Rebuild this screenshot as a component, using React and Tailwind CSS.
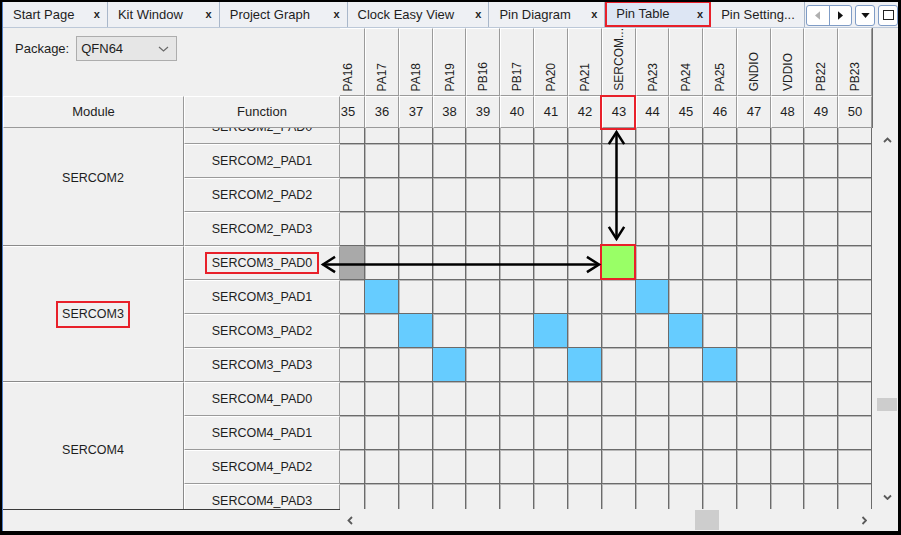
import React from 'react'

const font = "font-['Liberation_Sans',Arial,sans-serif]"

const tabs = [
  { label: 'Start Page', w: 'w-[105px]', close: true },
  { label: 'Kit Window', w: 'w-[112px]', close: true },
  { label: 'Project Graph', w: 'w-[128px]', close: true },
  { label: 'Clock Easy View', w: 'w-[142px]', close: true },
  { label: 'Pin Diagram', w: 'w-[116px]', close: true },
  { label: 'Pin Table', w: 'w-[106px]', close: true, active: true },
  { label: 'Pin Setting...', w: 'w-[94px]', close: false },
]

const pins = [
  { name: 'PA16', num: 35 },
  { name: 'PA17', num: 36 },
  { name: 'PA18', num: 37 },
  { name: 'PA19', num: 38 },
  { name: 'PB16', num: 39 },
  { name: 'PB17', num: 40 },
  { name: 'PA20', num: 41 },
  { name: 'PA21', num: 42 },
  { name: 'SERCOM...', num: 43, marked: true },
  { name: 'PA23', num: 44 },
  { name: 'PA24', num: 45 },
  { name: 'PA25', num: 46 },
  { name: 'GNDIO', num: 47 },
  { name: 'VDDIO', num: 48 },
  { name: 'PB22', num: 49 },
  { name: 'PB23', num: 50 },
]

const modules = [
  { name: 'SERCOM2' },
  { name: 'SERCOM3', marked: true },
  { name: 'SERCOM4' },
]

// row -> { col: kind }
const cellMap = {
  4: { 0: 'gray', 8: 'green' },
  5: { 1: 'blue', 9: 'blue' },
  6: { 2: 'blue', 6: 'blue', 10: 'blue' },
  7: { 3: 'blue', 7: 'blue', 11: 'blue' },
}

const cols = 'grid-cols-[34px_34px_34px_33px_34px_34px_34px_34px_34px_33px_34px_34px_34px_33px_34px_34px]'

const raised = 'border border-t-white border-l-white border-r-[#9a9a9a] border-b-[#9a9a9a]'

const Chevron = ({ dir }) => {
  const d = {
    up: 'M1 5 L4.5 1.5 L8 5',
    down: 'M1 1.5 L4.5 5 L8 1.5',
    left: 'M5 1 L1.5 4.5 L5 8',
    right: 'M1.5 1 L5 4.5 L1.5 8',
  }[dir]
  const box = dir === 'up' || dir === 'down' ? '0 0 9 6.5' : '0 0 6.5 9'
  const cls = dir === 'up' || dir === 'down' ? 'w-[9px] h-[6.5px]' : 'w-[6.5px] h-[9px]'
  return (
    <svg viewBox={box} className={cls}>
      <path d={d} fill="none" stroke="#5a5a5a" strokeWidth="1.8" />
    </svg>
  )
}

const TabBar = () => (
  <div className="h-[26px] flex bg-[#eef0f4] border-b border-[#bcc8d8]">
    {tabs.map(t => (
      <div
        key={t.label}
        className={
          t.active
            ? `${t.w} flex items-center justify-between pl-[9px] pr-[6px] bg-[#dde6f4] border-2 border-[#e8202a] -mt-[1px]`
            : `${t.w} flex items-center justify-between pl-[10px] pr-[7px] border-r border-[#a9b7ca]`
        }
      >
        <span className="text-[13px] text-[#1e1e1e] whitespace-nowrap">{t.label}</span>
        {t.close && <span className="text-[11px] font-bold text-[#222] leading-none">x</span>}
      </div>
    ))}
    <div className="flex items-center gap-[3px] pl-[1px] pt-[1px]">
      <div className="flex h-[21px] w-[46px] rounded-[3px] border border-[#7f9cc6] bg-white">
        <div className="flex-1 flex items-center justify-center border-r border-[#7f9cc6]">
          <svg viewBox="0 0 6 10" className="w-[5px] h-[9px]"><path d="M6 0 L0 5 L6 10 Z" fill="#b0b0b0" /></svg>
        </div>
        <div className="flex-1 flex items-center justify-center">
          <svg viewBox="0 0 6 10" className="w-[5px] h-[9px]"><path d="M0 0 L6 5 L0 10 Z" fill="#111" /></svg>
        </div>
      </div>
      <div className="flex h-[21px] w-[20px] items-center justify-center rounded-[3px] border border-[#7f9cc6] bg-white">
        <svg viewBox="0 0 10 6" className="w-[9px] h-[5px]"><path d="M0 0 L10 0 L5 6 Z" fill="#111" /></svg>
      </div>
      <div className="flex h-[21px] w-[20px] items-center justify-center rounded-[3px] border border-[#7f9cc6] bg-white">
        <div className="w-[11px] h-[10px] border-[1.5px] border-[#222]" />
      </div>
    </div>
  </div>
)

const Header = () => (
  <div className="h-[100px] flex">
    <div className="w-[337px] flex flex-col">
      <div className="h-[68px] flex items-start gap-[7px] pl-[12px] pt-[8px]">
        <span className="text-[13px] text-[#1e1e1e] leading-[25px]">Package:</span>
        <div className="w-[101px] h-[25px] flex items-center justify-between pl-[4px] pr-[7px] bg-[#e6e6e6] border border-[#adadad]">
          <span className="text-[13px] text-[#1e1e1e]">QFN64</span>
          <svg viewBox="0 0 11 6" className="w-[11px] h-[6px]">
            <path d="M1 1 L5.5 5 L10 1" fill="none" stroke="#6a6a6a" strokeWidth="1.2" />
          </svg>
        </div>
      </div>
      <div className="h-[32px] flex">
        <div className={`w-[181px] ${raised} flex items-center justify-center text-[13px] text-[#1e1e1e]`}>Module</div>
        <div className={`w-[156px] ${raised} flex items-center justify-center text-[13px] text-[#1e1e1e]`}>Function</div>
      </div>
    </div>
    <div className="w-[532px] overflow-x-clip">
      <div className={`-ml-[9px] grid ${cols} grid-rows-[68px_32px]`}>
        {pins.map(p => (
          <div key={p.name} className={`${raised} border-r-[#7c7c7c] flex items-end justify-center pb-[4px] overflow-hidden`}>
            <span className="[writing-mode:vertical-rl] rotate-180 text-[12px] text-[#1e1e1e] whitespace-nowrap leading-none">{p.name}</span>
          </div>
        ))}
        {pins.map(p => (
          <div key={p.num} className={`relative ${raised} border-r-[#7c7c7c] flex items-center justify-center text-[13px] text-[#1e1e1e]`}>
            {p.num}
            {p.marked && (
              <div className="absolute -left-[3px] -top-[2px] -right-[1px] -bottom-[3px] border-2 border-[#e8202a] z-20" />
            )}
          </div>
        ))}
      </div>
    </div>
    <div className="flex-1 border-l border-[#6e6e6e]" />
  </div>
)

const cellClass = kind => {
  if (kind === 'blue') return 'bg-[#66ccff]'
  if (kind === 'green') return 'relative bg-[#99ff66]'
  if (kind === 'gray') return 'bg-[#a9a9a9]'
  return 'shadow-[inset_1px_1px_0_#b8b8b8]'
}

const Body = () => (
  <div className="h-[381px] flex">
    <div className="w-[873px] overflow-hidden">
      <div className="-mt-[18px] flex">
        <div className="w-[181px] flex flex-col">
          {modules.map(m => (
            <div
              key={m.name}
              className="h-[136px] flex items-center justify-center border-t border-white border-b border-b-[#8a8a8a] border-r border-r-[#8a8a8a] text-[12.5px] text-[#1e1e1e]"
            >
              {m.marked ? (
                <span className="border-2 border-[#e8202a] px-[4px] py-[4px] leading-[15px]">{m.name}</span>
              ) : (
                m.name
              )}
            </div>
          ))}
        </div>
        <div className="w-[156px] flex flex-col">
          {modules.map(m =>
            [0, 1, 2, 3].map(i => (
              <div key={`${m.name}${i}`} className={`h-[34px] ${raised} flex items-center justify-center text-[12.5px] text-[#1e1e1e]`}>
                {m.name === 'SERCOM3' && i === 0 ? (
                  <span className="border-2 border-[#e8202a] px-[5px] py-[1px] leading-[16px]">{`${m.name}_PAD${i}`}</span>
                ) : (
                  `${m.name}_PAD${i}`
                )}
              </div>
            ))
          )}
        </div>
        <div className="w-[532px] overflow-hidden">
          <div className={`-ml-[9px] grid ${cols} auto-rows-[34px]`}>
            {Array.from({ length: 12 }).map((_, r) =>
              pins.map((p, c) => {
                const kind = cellMap[r] && cellMap[r][c]
                return (
                  <div key={`${r}-${c}`} className={`border-r border-b border-[#6b6b6b] ${cellClass(kind)}`}>
                    {kind === 'green' && (
                      <div className="absolute -left-[2px] -top-[2px] -right-[1px] -bottom-[1px] border-2 border-[#e8202a] z-10" />
                    )}
                  </div>
                )
              })
            )}
          </div>
        </div>
      </div>
    </div>
    <div className="w-[22px] flex flex-col bg-[#f0f0f0]">
      <div className="h-[24px] flex items-center justify-center"><Chevron dir="up" /></div>
      <div className="flex-1">
        <div className="mt-[246px] mx-[1px] h-[13px] bg-[#cdcdcd]" />
      </div>
      <div className="h-[24px] flex items-center justify-center"><Chevron dir="down" /></div>
    </div>
  </div>
)

const HScroll = () => (
  <div className="h-[22px] flex">
    <div className="w-[337px] border-t border-[#3a3a3a]" />
    <div className="w-[536px] flex">
      <div className="w-[20px] flex items-center justify-center"><Chevron dir="left" /></div>
      <div className="flex-1">
        <div className="ml-[335px] mt-[1px] w-[24px] h-[20px] bg-[#cdcdcd]" />
      </div>
      <div className="w-[24px] flex items-center justify-center"><Chevron dir="right" /></div>
    </div>
    <div className="flex-1" />
  </div>
)

const Arrows = () => (
  <svg className="absolute inset-0 w-[901px] h-[535px] pointer-events-none z-30" viewBox="0 0 901 535">
    <g fill="none" stroke="#000" strokeWidth="2.5" strokeLinecap="square">
      <line x1="324" y1="264.5" x2="598" y2="264.5" />
      <polyline points="334,257.5 323,264.5 334,271.5" />
      <polyline points="588,257.5 599,264.5 588,271.5" />
      <line x1="616.5" y1="133" x2="616.5" y2="238" />
      <polyline points="609.5,143 616.5,132 623.5,143" />
      <polyline points="609.5,228 616.5,239 623.5,228" />
    </g>
  </svg>
)

export default function App() {
  return (
    <div className={`relative w-[901px] h-[535px] bg-black pt-[2px] pl-[2px] pr-[3px] pb-[4px] ${font}`}>
      <div className="w-full h-full flex flex-col bg-[#f0f0f0] border-l border-[#4f7fc6] overflow-hidden">
        <TabBar />
        <Header />
        <Body />
        <HScroll />
      </div>
      <Arrows />
    </div>
  )
}
